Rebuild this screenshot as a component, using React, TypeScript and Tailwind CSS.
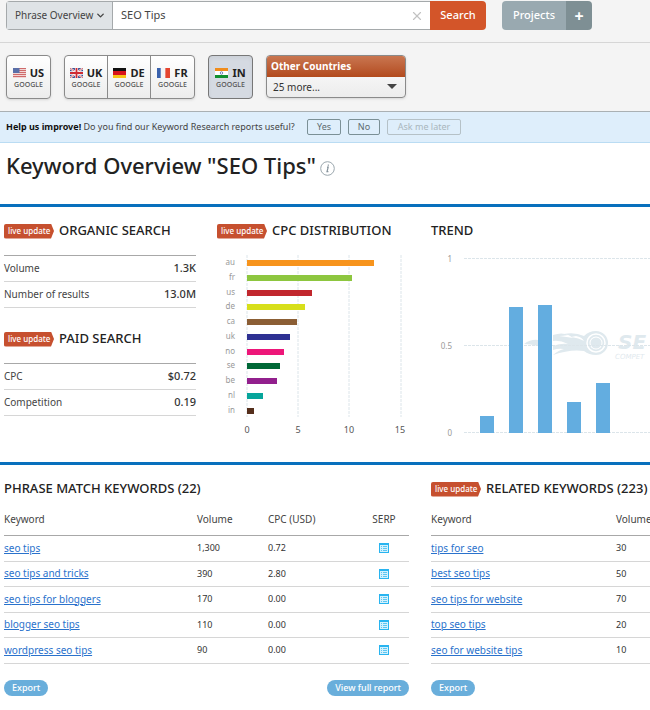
import { ReactNode } from "react";
import { ChevronDown, X } from "lucide-react";

const organic = [
  { label: "Volume", value: "1.3K" },
  { label: "Number of results", value: "13.0M" },
];

const paid = [
  { label: "CPC", value: "$0.72" },
  { label: "Competition", value: "0.19" },
];

const cpc = [
  { code: "au", width: 127, color: "#f7941d" },
  { code: "fr", width: 105, color: "#8dc63f" },
  { code: "us", width: 65, color: "#c1272d" },
  { code: "de", width: 58, color: "#d7df1a" },
  { code: "ca", width: 50, color: "#8b5e35" },
  { code: "uk", width: 43, color: "#2e3192" },
  { code: "no", width: 37, color: "#ed1679" },
  { code: "se", width: 33, color: "#006837" },
  { code: "be", width: 30, color: "#92208d" },
  { code: "nl", width: 16, color: "#06a59b" },
  { code: "in", width: 7, color: "#552f1c" },
];

const trend = [
  { x: 49, height: 17 },
  { x: 78, height: 126 },
  { x: 107, height: 128 },
  { x: 136, height: 31 },
  { x: 165, height: 50 },
];

const phraseKeywords = [
  { keyword: "seo tips", volume: "1,300", cpc: "0.72" },
  { keyword: "seo tips and tricks", volume: "390", cpc: "2.80" },
  { keyword: "seo tips for bloggers", volume: "170", cpc: "0.00" },
  { keyword: "blogger seo tips", volume: "110", cpc: "0.00" },
  { keyword: "wordpress seo tips", volume: "90", cpc: "0.00" },
];

const relatedKeywords = [
  { keyword: "tips for seo", volume: "30" },
  { keyword: "best seo tips", volume: "50" },
  { keyword: "seo tips for website", volume: "70" },
  { keyword: "top seo tips", volume: "20" },
  { keyword: "seo for website tips", volume: "10" },
];

function Flag({ code }: { code: string }) {
  return (
    <svg width="13" height="10" viewBox="0 0 14 10" preserveAspectRatio="none" className="shrink-0" aria-hidden="true">
      {code === "US" && (
        <>
          <rect width="14" height="10" fill="#f1d5d5" />
          {[0, 2, 4, 6, 8].map((y) => (
            <rect key={y} y={y} width="14" height="1" fill="#cf6a6a" />
          ))}
          <rect width="7" height="5" fill="#5a6fa8" />
        </>
      )}
      {code === "UK" && (
        <>
          <rect width="14" height="10" fill="#3b4f92" />
          <path d="M0 0l14 10M14 0L0 10" stroke="#fff" strokeWidth="2" />
          <path d="M0 0l14 10M14 0L0 10" stroke="#cf3b3b" strokeWidth="0.8" />
          <path d="M7 0v10M0 5h14" stroke="#fff" strokeWidth="3.4" />
          <path d="M7 0v10M0 5h14" stroke="#cf2b33" strokeWidth="2" />
        </>
      )}
      {code === "DE" && (
        <>
          <rect width="14" height="4" fill="#111" />
          <rect y="3" width="14" height="4" fill="#d8131c" />
          <rect y="7" width="14" height="3" fill="#f7c318" />
        </>
      )}
      {code === "FR" && (
        <>
          <rect width="14" height="10" fill="#f4f4f6" />
          <rect width="4" height="10" fill="#3a62ad" />
          <rect x="9" width="5" height="10" fill="#e5452f" />
        </>
      )}
      {code === "IN" && (
        <>
          <rect width="14" height="10" fill="#fff" />
          <rect width="14" height="3" fill="#f08c1c" />
          <rect y="7" width="14" height="3" fill="#12902f" />
          <circle cx="7" cy="5" r="1.3" fill="none" stroke="#5468a8" strokeWidth="0.8" />
        </>
      )}
    </svg>
  );
}

function Country({ code }: { code: string }) {
  return (
    <button type="button" className="flex w-[43px] flex-col items-center justify-center pt-0.5 leading-none">
      <span className="flex items-center gap-1 text-[11px] leading-3 font-bold text-[#222]">
        <Flag code={code} />
        {code}
      </span>
      <span className="mt-0.5 text-[7px] leading-2 font-medium text-[#555]">GOOGLE</span>
    </button>
  );
}

function LiveUpdate() {
  return (
    <span className="flex h-[15px] w-[50px] shrink-0 items-center rounded-l-xs bg-[#c6502f] pl-1 text-[8px] font-medium text-white [clip-path:polygon(0_0,94%_0,100%_50%,94%_100%,0_100%)]">
      live update
    </span>
  );
}

function Title({ live = false, children }: { live?: boolean; children: ReactNode }) {
  return (
    <h2 className="flex h-5 items-center gap-[5px] text-[13px] font-medium whitespace-nowrap text-[#222]">
      {live && <LiveUpdate />}
      {children}
    </h2>
  );
}

function Stats({ rows }: { rows: { label: string; value: string }[] }) {
  return (
    <table className="mt-[14px] w-full border-t border-[#a8a8a8] text-[10px]">
      <tbody>
        {rows.map((row) => (
          <tr key={row.label} className="h-[26px] border-b border-[#d6d6d6]">
            <th scope="row" className="text-left font-normal text-[#444]">{row.label}</th>
            <td className="text-right text-[11px] font-medium text-[#333]">{row.value}</td>
          </tr>
        ))}
      </tbody>
    </table>
  );
}

function CpcChart() {
  return (
    <svg width="192" height="184" className="mt-3 text-[8px]" role="img" aria-label="CPC distribution">
      {[30, 81, 132, 184].map((x) => (
        <line key={x} x1={x} y1="2" x2={x} y2="164" stroke="#dce5ea" strokeDasharray="3 1" />
      ))}
      {cpc.map((bar, i) => (
        <g key={bar.code}>
          <text x="18" y={12 + Math.round(i * 14.75)} textAnchor="end" fill="#999">{bar.code}</text>
          <rect x="30" y={7 + Math.round(i * 14.75)} width={bar.width} height="6" fill={bar.color} />
        </g>
      ))}
      {[0, 5, 10, 15].map((n, i) => (
        <text key={n} x={30 + i * 51} y="180" textAnchor="middle" fill="#555" className="text-[9px]">{n}</text>
      ))}
    </svg>
  );
}

function Watermark() {
  return (
    <g fill="#dfe9ee">
      <path d="M93 91q7-5 14-4v6q-8-2-14-2z" />
      <path d="M122 82q9-3 15 0-5 1-9 1 8 1 14 2-5-4-9-4 11-2 20 2 5-5 12-5a12 12 0 0 1 0 24q-7 0-12-4-14-2-31 4 6-5 11-6-6-1-11 1v-4q8-3 15-2-8-4-15-3z" />
      <path d="M140 84q8 1 13 4-2-4-8-5z" fill="#fff" />
      <circle cx="165" cy="90" r="9" fill="none" stroke="#fff" strokeWidth="1.5" />
      <circle cx="165" cy="90" r="6.5" fill="#fff" />
      <circle cx="165" cy="90" r="5.5" />
      <text x="187" y="96" className="font-['DejaVu_Sans',sans-serif] text-[20px] font-bold italic">SE</text>
      <text x="184" y="106" className="font-['DejaVu_Sans',sans-serif] text-[7px] italic">COMPET</text>
    </g>
  );
}

function TrendChart() {
  return (
    <svg width="100%" height="190" className="mt-3 text-[8px]" role="img" aria-label="Trend">
      <Watermark />
      {[{ y: 6, label: "1" }, { y: 93, label: "0.5" }, { y: 180, label: "0" }].map((line) => (
        <g key={line.label}>
          <line x1="33" y1={line.y - 0.5} x2="100%" y2={line.y - 0.5} stroke="#dce5ea" strokeDasharray="3 1" />
          <text x="21" y={line.y + 3} textAnchor="end" fill="#999">{line.label}</text>
        </g>
      ))}
      {trend.map((bar) => (
        <rect key={bar.x} x={bar.x} y={180 - bar.height} width="14" height={bar.height} fill="#63ade0" />
      ))}
    </svg>
  );
}

function SerpIcon() {
  return (
    <svg width="10" height="10" viewBox="0 0 10 10" className="mx-auto" aria-hidden="true">
      <rect x="0.5" y="0.5" width="9" height="9" fill="#d3f1fd" stroke="#28b4f0" />
      <path d="M0 1h10" stroke="#28b4f0" strokeWidth="2" />
      <path d="M2 3.5h1M4 3.5h4M2 5.5h1M4 5.5h4M2 7.5h1M4 7.5h4" stroke="#5cc6f2" />
    </svg>
  );
}

function Pill({ children }: { children: ReactNode }) {
  return (
    <button type="button" className="h-4 rounded-full bg-[#69aedb] px-2 text-[9px] font-medium text-white">
      {children}
    </button>
  );
}

export default function App() {
  return (
    <div className="min-h-screen overflow-hidden bg-white font-['Noto_Sans',sans-serif] text-[#333]">
      <header className="bg-[#f4f4f4]">
        <div className="flex h-[43px] items-start border-b border-[#d6d6d6] pt-px pl-1.5">
          <div className="flex h-[29px] rounded-l-sm border border-r-0 border-[#a5a9ab] bg-white">
            <button type="button" className="flex w-[106px] items-center justify-between border-r border-[#a5a9ab] bg-[#dfe3e6] pr-1.5 pl-2 text-[10px] text-[#444]">
              Phrase Overview
              <ChevronDown size={11} strokeWidth={3} />
            </button>
            <input aria-label="Keyword" defaultValue="SEO Tips" className="w-[297px] px-2 text-[11px] text-[#444] outline-none" />
            <button type="button" aria-label="Clear" className="w-5 text-[#c2c2c2]">
              <X size={14} strokeWidth={2} />
            </button>
          </div>
          <button type="button" className="h-[29px] w-14 rounded-r-sm bg-[#d35529] text-[11px] font-medium text-white">Search</button>
          <div className="ml-4 flex h-[29px] overflow-hidden rounded-sm text-white">
            <button type="button" className="w-16 bg-[#99a9b0] text-[11px] font-medium">Projects</button>
            <button type="button" aria-label="Add project" className="w-[26px] bg-[#7e8f94] text-base font-bold">+</button>
          </div>
        </div>

        <div className="flex h-[68px] items-center gap-[13px] pb-px pl-1.5">
          <div className="flex h-11 rounded-sm border border-[#8a8a8a] bg-linear-to-b from-white to-[#ececec] shadow-sm">
            <Country code="US" />
          </div>
          <div className="flex h-11 divide-x divide-[#8a8a8a] rounded-sm border border-[#8a8a8a] bg-linear-to-b from-white to-[#ececec] shadow-sm">
            <Country code="UK" />
            <Country code="DE" />
            <Country code="FR" />
          </div>
          <div className="flex h-11 rounded-sm border border-[#777] bg-[#d5dae2] inset-shadow-sm">
            <Country code="IN" />
          </div>
          <div className="h-[43px] w-[140px] overflow-hidden rounded-sm border border-[#8a8a8a] bg-linear-to-b from-white to-[#ececec] shadow-sm">
            <div className="h-[21px] bg-linear-to-b from-[#c97650] to-[#b24a1c] pl-1 text-[10px] leading-5 font-bold text-white">
              Other Countries
            </div>
            <button type="button" className="flex h-5 w-full items-center justify-between pr-2 pl-1.5 text-[10px] text-[#333]">
              25 more...
              <svg width="10" height="6" aria-hidden="true"><path d="M0 0h10L5 5z" fill="#444" /></svg>
            </button>
          </div>
        </div>
      </header>

      <div className="flex h-8 items-center gap-[7px] border-t border-b border-t-[#aab0b3] border-b-[#badcf3] bg-[#deeefb] pl-1.5 text-[9px]">
        <p className="w-[294px] whitespace-nowrap text-[#444]"><b className="text-[#111]">Help us improve!</b> Do you find our Keyword Research reports useful?</p>
        <button type="button" className="h-4 w-[34px] rounded-xs border border-[#7b9096] text-[#5d6b70]">Yes</button>
        <button type="button" className="h-4 w-8 rounded-xs border border-[#7b9096] text-[#5d6b70]">No</button>
        <button type="button" className="h-4 w-[74px] rounded-xs border border-[#b5c1c7] text-[#a9b6bd]">Ask me later</button>
      </div>

      <div className="flex h-[61px] items-start gap-1 pt-1.5 pl-1.5">
        <h1 className="text-[22px] leading-8 font-medium text-[#222]">Keyword Overview "SEO Tips"</h1>
        <svg width="15" height="15" viewBox="0 0 15 15" className="mt-3" role="img" aria-label="Info">
          <circle cx="7.5" cy="7.5" r="6.8" fill="none" stroke="#9aa6ad" />
          <path d="M7 6.2h1.2L7 10.6h1.4M8.3 3.6v1.2" fill="none" stroke="#84919a" strokeWidth="1.2" />
        </svg>
      </div>

      <main>
        <section className="grid grid-cols-[192px_193px_minmax(0,1fr)] gap-x-[21px] border-y-[3px] border-[#0870bd] pt-[14px] pb-[19px] pl-1">
          <div>
            <Title live>ORGANIC SEARCH</Title>
            <Stats rows={organic} />
            <div className="h-[21px]" />
            <Title live>PAID SEARCH</Title>
            <Stats rows={paid} />
          </div>
          <div>
            <Title live>CPC DISTRIBUTION</Title>
            <CpcChart />
          </div>
          <div>
            <Title>TREND</Title>
            <TrendChart />
          </div>
        </section>

        <section className="grid grid-cols-[405px_minmax(0,1fr)] gap-x-[22px] pt-[14px] pl-1">
          <div>
            <Title>PHRASE MATCH KEYWORDS (22)</Title>
            <table className="mt-1.5 w-full table-fixed text-left text-[10px]">
              <thead>
                <tr className="h-[30px] border-b border-[#a8a8a8] text-[#444]">
                  <th className="w-[193px] font-normal">Keyword</th>
                  <th className="w-[71px] font-normal">Volume</th>
                  <th className="font-normal">CPC (USD)</th>
                  <th className="w-[50px] text-center font-normal">SERP</th>
                </tr>
              </thead>
              <tbody>
                {phraseKeywords.map((row) => (
                  <tr key={row.keyword} className="h-[26px] border-b border-[#d6d6d6] even:h-[25px]">
                    <td><a href="#" className="text-[#2a72cc] underline">{row.keyword}</a></td>
                    <td className="text-[9px]">{row.volume}</td>
                    <td className="text-[9px]">{row.cpc}</td>
                    <td><SerpIcon /></td>
                  </tr>
                ))}
              </tbody>
            </table>
            <div className="mt-4 flex justify-between">
              <Pill>Export</Pill>
              <Pill>View full report</Pill>
            </div>
          </div>
          <div>
            <Title live>RELATED KEYWORDS (223)</Title>
            <table className="mt-1.5 w-full table-fixed text-left text-[10px]">
              <thead>
                <tr className="h-[30px] border-b border-[#a8a8a8] text-[#444]">
                  <th className="w-[185px] font-normal">Keyword</th>
                  <th className="font-normal">Volume</th>
                </tr>
              </thead>
              <tbody>
                {relatedKeywords.map((row) => (
                  <tr key={row.keyword} className="h-[26px] border-b border-[#d6d6d6] even:h-[25px]">
                    <td><a href="#" className="text-[#2a72cc] underline">{row.keyword}</a></td>
                    <td className="text-[9px]">{row.volume}</td>
                  </tr>
                ))}
              </tbody>
            </table>
            <div className="mt-4 flex">
              <Pill>Export</Pill>
            </div>
          </div>
        </section>
      </main>
    </div>
  );
}
